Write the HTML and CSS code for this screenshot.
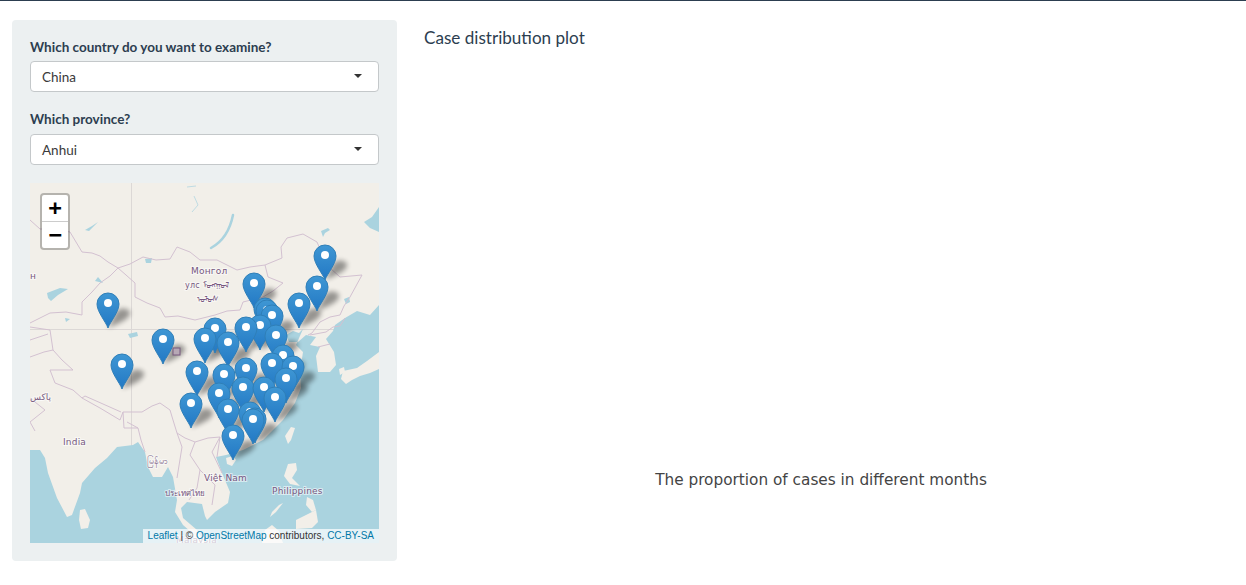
FILE: index.html
```html
<!DOCTYPE html>
<html lang="en">
<head>
<meta charset="utf-8">
<title>Case distribution</title>
<link rel="stylesheet" href="styles.css">
</head>
<body>
<div class="layout">
  <aside class="panel">
    <div class="field">
      <label class="field-label">Which country do you want to examine?</label>
      <div class="select"><span>China</span><i class="caret"></i></div>
    </div>
    <div class="field">
      <label class="field-label">Which province?</label>
      <div class="select"><span>Anhui</span><i class="caret"></i></div>
    </div>
    <div class="map">
      <svg class="map-canvas" viewBox="30 183 349 360" width="349" height="360" xmlns="http://www.w3.org/2000/svg">
        <defs>
          <linearGradient id="pinfill" x1="0" y1="0" x2="0" y2="1">
            <stop offset="0" stop-color="#3f97d4"/>
            <stop offset="1" stop-color="#2278c4"/>
          </linearGradient>
          <filter id="soft" x="-60%" y="-60%" width="220%" height="220%"><feGaussianBlur stdDeviation="2.6"/></filter>
          <g id="shadow"><path class="pin-shadow" d="M0 25L8 9C12 4 20 5 22 9C23 15 12 20 0 25Z"/></g>
          <g id="pin">
            <path class="pin-body" d="M0 25C-2 19-11 9-11 1A11 11 0 1 1 11 1C11 9 2 19 0 25Z"/>
            <circle class="pin-dot" cx="0" cy="0" r="4"/>
          </g>
        </defs>

        <rect class="land" x="30" y="183" width="349" height="360"/>
        <path class="grid" d="M131.5 183V543M30 329.5H379"/>

        <path class="water" d="M30 450L40 450L45 458L48 473L57 498L67 517L72 515L80 493L82 483L95 468L107 458L117 447L133 445L138 442L145 452L148 467L153 477L162 477L168 467L173 477L177 500L175 512L183 525L191 532L197 543L30 543Z"/>
        <path class="water" d="M379 305L370 315L357 311L345 318L335 325L333 331L326 339L334 352L336 365L330 372L318 372L316 356L320 347L310 345L316 337L306 335L298 342L289 342L286 335L293 331L299 333L303 329L296 345L303 352L300 372L301 388L295 403L283 420L263 440L243 450L226 455L216 457L222 473L230 492L228 503L215 512L207 520L205 516L202 504L187 502L181 508L183 518L197 530L205 543L379 543Z"/>
        <path class="water" d="M379 207L372 217L364 222L370 228L379 232Z"/>

        <path class="land" d="M80 510L85 509L90 520L88 528L81 529L79 520Z"/>
        <path class="land" d="M226 458L233 456L236 460L232 466L227 464Z"/>
        <path class="land" d="M291 427L295 428L291 440L288 444L285 436Z"/>
        <path class="land" d="M288 464L296 463L297 470L292 478L300 486L290 484L284 476Z"/>
        <path class="land" d="M307 497L313 500L316 510L312 512L306 505Z"/>
        <path class="land" d="M296 520L304 516L316 510L318 522L312 528L296 529Z"/>
        <path class="land" d="M283 503L276 512L270 517L272 512L279 505Z"/>
        <path class="land" d="M262 543L265 530L272 525L279 531L283 543Z"/>
        <path class="land" d="M379 352L367 361L357 368L343 371L341 379L346 384L352 380L360 376L370 373L379 369Z"/>
        <path class="land" d="M339 369L344 367L345 372L340 375Z"/>

        <path class="lake-line" d="M233 215C230 230 222 242 211 248"/>
        <path class="lake" d="M47 293L60 288L68 289L58 295L51 301L48 298Z"/>
        <path class="lake" d="M321 231L328 228L330 230L325 233L323 237Z"/>
        <path class="lake" d="M152 258L145 259L146 263L151 263Z"/>
        <path class="lake" d="M92 226L98 222L89 231L85 230Z"/>
        <path class="lake" d="M98 277L103 283L95 281Z"/>
        <path class="lake" d="M128 334L137 332L138 336L130 338Z"/>
        <path class="lake-thin" d="M187 187L196 186M192 212L198 205L194 196"/>
        <path class="lake" d="M65 318L70 319L66 322Z"/>
        <path class="lake" d="M344 299L349 297L350 302L346 304Z"/>

        <path class="border" d="M30 220L40 229L55 229L70 232L76 242L82 252L92 253L100 256L108 262L118 268L130 264L143 257L156 260L170 259L177 247L190 252L200 260L217 260L227 265L237 270L250 267L265 265L268 277L283 283L273 291L263 297L243 302L240 310L227 311L215 315L195 320L178 316L165 317L160 308L147 303L135 297L135 283L126 275L118 268L110 276L100 283L92 292L82 302L82 315L66 312L50 313L30 323"/>
        <path class="border" d="M265 265L282 258L281 247L287 238L303 234L317 242L323 256L330 268L340 277L362 275L356 286L350 297L344 306L340 315L330 317L320 322L312 333L308 335"/>
        <path class="border" d="M345 318L340 326L333 327L326 332L310 335M318 347L330 344"/>
        <path class="border" d="M30 327L50 330L53 350L62 360L73 370L50 370L55 383L73 390L82 398L100 408L120 420L123 412L142 412L152 406L160 403L170 410L173 420L177 433L185 438L195 442L208 438L220 437L217 457"/>
        <path class="border" d="M30 340L48 334M30 357L44 352L53 350M30 398L45 410L30 422L35 431"/>
        <path class="border" d="M82 398L85 396L121 412M123 412L124 428L138 428L141 440L145 452M138 428L127 422M177 433L182 447L177 478M195 442L190 455L200 470L197 488L189 500M200 470L215 485L212 505M220 437L212 452L222 473"/>

        <use href="#shadow" x="325" y="255"/><use href="#shadow" x="254" y="283"/><use href="#shadow" x="317" y="286"/><use href="#shadow" x="299" y="303"/><use href="#shadow" x="108" y="303"/><use href="#shadow" x="272" y="315"/><use href="#shadow" x="260" y="325"/><use href="#shadow" x="246" y="327"/><use href="#shadow" x="215" y="328"/><use href="#shadow" x="276" y="335"/><use href="#shadow" x="205" y="338"/><use href="#shadow" x="163" y="339"/><use href="#shadow" x="228" y="342"/><use href="#shadow" x="283" y="355"/><use href="#shadow" x="122" y="364"/><use href="#shadow" x="272" y="363"/><use href="#shadow" x="293" y="366"/><use href="#shadow" x="246" y="368"/><use href="#shadow" x="197" y="371"/><use href="#shadow" x="224" y="374"/><use href="#shadow" x="286" y="378"/><use href="#shadow" x="243" y="387"/><use href="#shadow" x="264" y="387"/><use href="#shadow" x="219" y="393"/><use href="#shadow" x="275" y="397"/><use href="#shadow" x="191" y="403"/><use href="#shadow" x="228" y="409"/><use href="#shadow" x="255" y="418"/><use href="#shadow" x="233" y="435"/>

        <text class="place" x="191" y="274">Монгол</text>
        <text class="place small" x="185" y="288">улс ᠮᠤᠩᠭᠤᠯ</text>
        <text class="place small" x="197" y="302">ᠤᠯᠤᠰ</text>
        <text class="place" x="30" y="279">н</text>
        <text class="place" x="63" y="445">India</text>
        <text class="place" x="147" y="464">မြန်မာ</text>
        <text class="place thai" x="165" y="496">ประเทศไทย</text>
        <text class="place" x="204" y="481">Việt Nam</text>
        <text class="place" x="272" y="494">Philippines</text>
        <text class="place" x="30" y="400">پاکس</text>
        <text class="place" x="176" y="543">Malaysia</text>
        <rect class="tibet" x="173" y="348" width="7" height="7"/>

        <use href="#pin" x="325" y="255"/><use href="#pin" x="254" y="283"/><use href="#pin" x="317" y="286"/><use href="#pin" x="299" y="303"/><use href="#pin" x="108" y="303"/><use href="#pin" x="265" y="308"/><use href="#pin" x="267" y="310"/><use href="#pin" x="272" y="315"/><use href="#pin" x="260" y="325"/><use href="#pin" x="246" y="327"/><use href="#pin" x="215" y="328"/><use href="#pin" x="276" y="335"/><use href="#pin" x="205" y="338"/><use href="#pin" x="163" y="339"/><use href="#pin" x="228" y="342"/><use href="#pin" x="283" y="355"/><use href="#pin" x="272" y="363"/><use href="#pin" x="122" y="364"/><use href="#pin" x="293" y="366"/><use href="#pin" x="246" y="368"/><use href="#pin" x="197" y="371"/><use href="#pin" x="224" y="374"/><use href="#pin" x="286" y="378"/><use href="#pin" x="243" y="387"/><use href="#pin" x="264" y="387"/><use href="#pin" x="219" y="393"/><use href="#pin" x="275" y="397"/><use href="#pin" x="191" y="403"/><use href="#pin" x="228" y="409"/><use href="#pin" x="250" y="412"/><use href="#pin" x="255" y="418"/><use href="#pin" x="253" y="419"/><use href="#pin" x="233" y="435"/>
      </svg>
      <div class="zoom-control">
        <a class="zoom-btn zoom-in">+</a>
        <a class="zoom-btn">−</a>
      </div>
      <div class="attribution"><a>Leaflet</a> | © <a>OpenStreetMap</a> contributors, <a>CC-BY-SA</a></div>
    </div>
  </aside>
  <main class="content">
    <h4 class="plot-title">Case distribution plot</h4>
    <div class="plot"></div>
    <p class="plot-caption">The proportion of cases in different months</p>
  </main>
</div>
</body>
</html>
```
FILE: styles.css
```css
* { box-sizing: border-box; }
html, body { margin: 0; padding: 0; }
body {
  height: 585px;
  overflow: hidden;
  background: #fff;
  border-top: 1px solid #2c3e50;
  font-family: Lato, "Liberation Sans", sans-serif;
  color: #2c3e50;
}
.layout {
  display: flex;
  align-items: flex-start;
  padding: 19px 28px 0 12px;
  gap: 27px;
}
.panel {
  flex: 0 0 385px;
  height: 541px;
  padding: 17px 18px 0;
  background: #ecf0f1;
  border-radius: 4px;
}
.field { margin-bottom: 18px; }
.field:first-child { margin-bottom: 17px; }
.field-label {
  display: block;
  height: 20px;
  margin-bottom: 4px;
  font-size: 13.5px;
  font-weight: 700;
  line-height: 20px;
}
.field + .field .field-label { margin-bottom: 5px; }
.select {
  display: flex;
  align-items: center;
  justify-content: space-between;
  height: 31px;
  padding: 0 16px 0 11px;
  background: #fff;
  border: 1px solid #c4c8ca;
  border-radius: 4px;
  font-size: 13.5px;
  color: #3a3a3a;
}
.caret {
  width: 0;
  height: 0;
  margin-bottom: 2px;
  border-style: solid;
  border-width: 4px 4.5px 0;
  border-color: #333 transparent transparent;
}
.map {
  position: relative;
  width: 349px;
  height: 360px;
  overflow: hidden;
}
.map-canvas { display: block; }
.land { fill: #f2efe9; }
.water, .lake { fill: #aad3df; }
.lake-line { fill: none; stroke: #aad3df; stroke-width: 2.5; stroke-linecap: round; }
.lake-thin { fill: none; stroke: #aad3df; stroke-width: 1; opacity: .7; }
.grid { fill: none; stroke: #dcd8d6; stroke-width: 1; }
.border { fill: none; stroke: #d3c1d1; stroke-width: 1; stroke-linejoin: round; }
.pin-body { fill: url(#pinfill); stroke: #2f7fb8; stroke-width: 1; }
.pin-dot { fill: #fff; }
.pin-shadow { fill: #000; opacity: .38; filter: url(#soft); }
.place {
  font-family: "DejaVu Sans", "Noto Sans", sans-serif;
  font-size: 9px;
  letter-spacing: .2px;
  fill: #77587f;
  stroke: #fff;
  stroke-opacity: .55;
  stroke-width: 2px;
  paint-order: stroke;
}
.place.small { font-size: 8px; }
.place.thai { font-size: 8px; letter-spacing: 0; }
.tibet { fill: #b7a8b5; stroke: #77587f; stroke-width: 1; }
.zoom-control {
  position: absolute;
  top: 10px;
  left: 10px;
  width: 30px;
  background: #fff;
  border: 2px solid rgba(0, 0, 0, .25);
  border-radius: 4px;
  background-clip: padding-box;
}
.zoom-btn {
  display: block;
  height: 26px;
  font-family: "DejaVu Sans Mono", "Liberation Mono", monospace;
  font-size: 22px;
  font-weight: 700;
  line-height: 26px;
  text-align: center;
  color: #000;
}
.zoom-in { border-bottom: 1px solid #ccc; height: 27px; }
.attribution {
  position: absolute;
  right: 0;
  bottom: 0;
  padding: 0 5px;
  height: 14px;
  font-family: "Liberation Sans", Arial, sans-serif;
  font-size: 10px;
  line-height: 14px;
  color: #333;
  background: rgba(255, 255, 255, .7);
  white-space: nowrap;
}
.attribution a { color: #0078a8; }
.content { flex: 1; min-width: 0; }
.plot-title {
  margin: 7px 0 0;
  height: 21px;
  font-size: 17.1px;
  font-weight: 400;
  line-height: 21px;
}
.plot { height: 400px; }
.plot-caption {
  margin: 22px 0 0;
  font-family: "DejaVu Sans", Verdana, sans-serif;
  font-size: 15.3px;
  line-height: 20px;
  text-align: center;
  color: #444;
}
```
